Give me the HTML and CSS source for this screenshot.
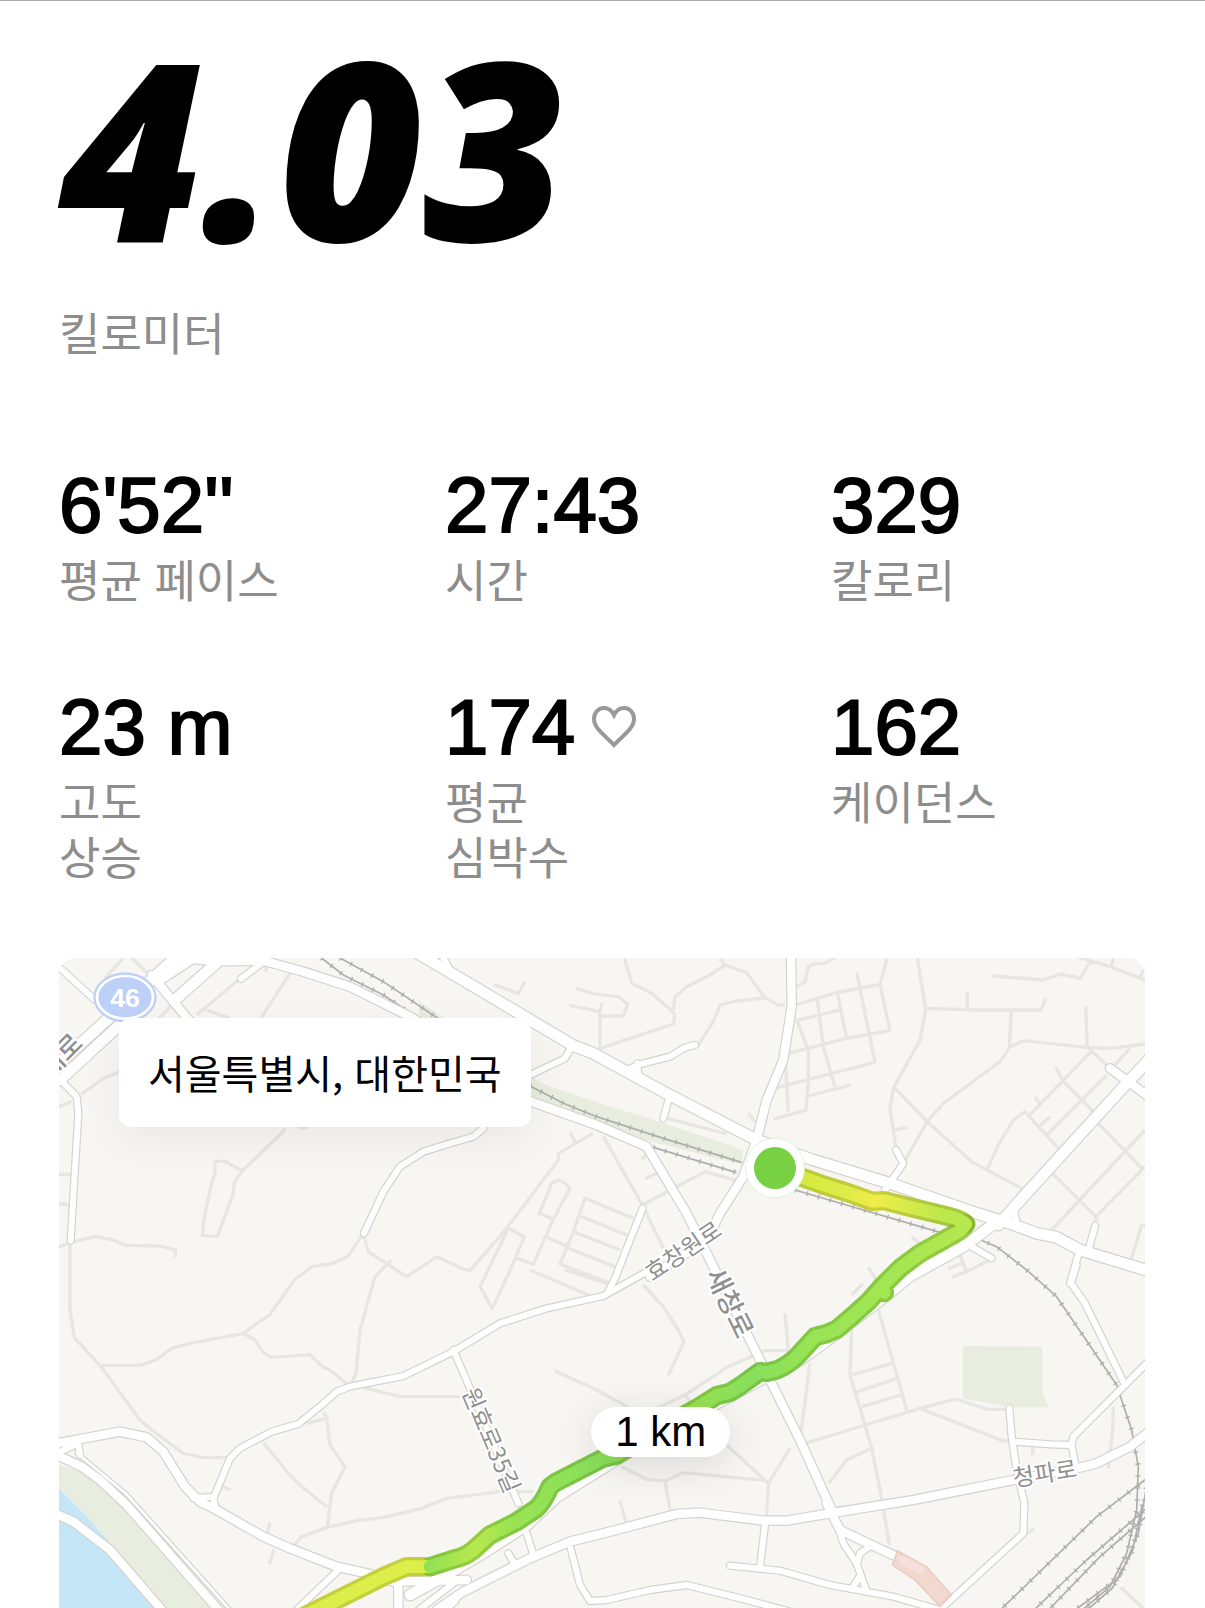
FILE: index.html
```html
<!DOCTYPE html>
<html lang="ko">
  <head>
    <meta charset="UTF-8" />
    <meta name="viewport" content="width=device-width, initial-scale=1.0" />
    <title>러닝 기록</title>
    <link rel="stylesheet" href="styles.css">
  </head>
  <body>
    <main class="run">
      <section class="distance">
        <h1 class="distance-value">4.03</h1>
        <p class="label">킬로미터</p>
      </section>

      <section class="stats">
        <div class="stat">
          <p class="value">6'52''</p>
          <p class="label">평균 페이스</p>
        </div>
        <div class="stat">
          <p class="value">27:43</p>
          <p class="label">시간</p>
        </div>
        <div class="stat">
          <p class="value">329</p>
          <p class="label">칼로리</p>
        </div>
        <div class="stat">
          <p class="value">23 m</p>
          <p class="label">고도<br />상승</p>
        </div>
        <div class="stat">
          <p class="value">
            174
            <svg class="heart" viewBox="0 0 44 42" aria-hidden="true">
              <path d="M22 39 C15 31 2 23 2 13 C2 6 7 2 12 2 C17 2 20 5 22 9 C24 5 27 2 32 2 C37 2 42 6 42 13 C42 23 29 31 22 39 Z" />
            </svg>
          </p>
          <p class="label">평균<br />심박수</p>
        </div>
        <div class="stat">
          <p class="value">162</p>
          <p class="label">케이던스</p>
        </div>
      </section>

      <section class="map">
        <svg class="map-canvas" viewBox="0 0 3258 1950" role="img" aria-label="러닝 경로">
          <defs>
            <linearGradient id="leg-out" gradientUnits="userSpaceOnUse" x1="2150" y1="0" x2="2720" y2="0">
              <stop offset="0" stop-color="#d0e83f" />
              <stop offset="0.4" stop-color="#dfec48" />
              <stop offset="0.52" stop-color="#f1ec49" />
              <stop offset="0.62" stop-color="#e2ec4a" />
              <stop offset="0.85" stop-color="#bfe84c" />
              <stop offset="1" stop-color="#b6e84e" />
            </linearGradient>
            <linearGradient id="leg-back" gradientUnits="userSpaceOnUse" x1="700" y1="0" x2="2720" y2="0">
              <stop offset="0" stop-color="#deee45" />
              <stop offset="0.17" stop-color="#d9ed49" />
              <stop offset="0.19" stop-color="#8edf54" />
              <stop offset="0.23" stop-color="#a0e54f" />
              <stop offset="0.27" stop-color="#b8e84e" />
              <stop offset="0.33" stop-color="#98e353" />
              <stop offset="0.45" stop-color="#8be05a" />
              <stop offset="0.6" stop-color="#98e353" />
              <stop offset="0.68" stop-color="#89df5b" />
              <stop offset="0.78" stop-color="#99e454" />
              <stop offset="0.9" stop-color="#a5e652" />
              <stop offset="1" stop-color="#b6e84e" />
            </linearGradient>

            <g id="roads">
              <!-- north west -->
              <g transform="translate(-27 -24)">
                <path class="w20" d="M20,45 L135,150" />
                <path class="w34" d="M400,0 L320,75 L10,355 M440,15 L325,90" />
                <path class="w26" d="M380,22 L500,34 L640,32 M305,75 L370,155 L425,220" />
                <path class="w34" d="M500,38 L372,152" />
                <path class="w34" d="M230,205 L30,390" />
                <path class="w20" d="M20,378 L80,440 L85,490 L62,872" />
                <path class="w20" d="M645,32 L572,87" />
                <path class="w26" d="M640,32 L760,65 L900,110 L1090,205 L1440,455" />
                <path class="w20" d="M1300,535 L1270,560 L1200,580 L1120,605 L1050,650 L1000,725 L942,850" />
              </g>
              <!-- north -->
              <g transform="translate(1113 -24)">
                <path class="w34" d="M-70,-10 L200,150 L430,287 L490,310 L700,425 L980,570 L1140,627 L1380,700 L1640,790 L1740,820 L1820,850 L1880,862 L1950,900 L2180,970" />
                <path class="w20" d="M35,15 L55,50 M425,290 L405,325 L290,380" />
                <path class="w20" d="M590,360 L640,340 L720,320 L765,293 L795,285 M622,340 L625,375" />
                <path class="w20" d="M715,450 L700,505" />
                <path class="w26" d="M290,450 L500,525 L650,590" />
                <path class="w26" d="M650,590 L770,790 L850,950 L1000,1250 L1110,1470 L1205,1680" />
                <path class="w26" d="M1083,0 L1085,170 L1060,330 L1010,450 L980,570 L940,680 L870,790 L830,870 L660,980" />
                <path class="w20" d="M638,775 L600,870 L555,985 L535,1025" />
              </g>
              <!-- north east -->
              <g transform="translate(2253 -24)">
                <path class="w20" d="M258,600 L280,640 L225,720" />
                <path class="w34" d="M565,825 L640,740 L955,395 L1030,315" />
                <path class="w26" d="M900,355 L955,395 L1030,450" />
                <path class="w20" d="M610,770 L620,820 M545,925 L460,875 M856,827 L835,900 M803,920 L780,1000" />
                <path class="w20" d="M995,955 L1010,970" />
              </g>
              <!-- south west -->
              <g transform="translate(-27 936)">
                <path class="w20" d="M1800,0 L1660,78 L1490,115 L1350,160 L1210,245 L1060,318 L900,350 L860,365 L815,405 L745,462 L665,485 L570,535 L540,565 L490,685 L497,715 M490,680 L430,685" />
                <path class="w26" d="M20,520 L210,485 L290,502 L340,545 L405,650 L450,695 L500,720 L640,800 L720,835 L860,890 L960,912 L1030,935 L1250,930" />
                <path class="w20" d="M865,900 L740,1020 M1210,940 L1100,1025" />
                <path class="w26" d="M1045,935 V1030" />
                <path class="w26" d="M10,550 L95,590 L150,630 L230,705 L510,1025" />
                <path class="w8" d="M80,548 L230,673 L545,1025" />
                <path class="w20" d="M20,550 L85,520 L90,555" />
                <path class="w26" d="M10,728 L70,755 L180,840 L340,1025" />
              </g>
              <!-- south -->
              <g transform="translate(1113 936)">
                <path class="w20" d="M70,240 L120,355 L265,700" />
                <path class="w34" d="M1700,-145 L1600,-70 L1440,18 L1345,95 L1200,205 L1110,270 L1000,325 L860,400 L590,550 L380,680 L290,765 L150,855 L30,925 L-60,975" />
                <path class="w34" d="M20,1030 L70,990" />
                <path class="w26" d="M20,1020 L100,965 L300,865 L420,815 L520,790 L740,732 L810,728 L1000,752 L1070,752 L1200,730 L1450,690 L1740,632 L1940,595 L2000,580 L2100,530 L2170,475" />
                <path class="w20" d="M290,790 L312,860 M235,850 L258,890 M422,835 L450,945 L480,993 L530,990 L660,960 L770,945 L950,990 L1100,1030" />
                <path class="w20" d="M1005,765 L990,890 M900,887 L1050,902 L1200,945 L1390,980 L1530,1020" />
              </g>
              <!-- south east -->
              <g transform="translate(2253 936)">
                <path class="w20" d="M800,-15 L783,40 L825,100 L945,345" />
                <path class="w20" d="M1020,270 L945,345 L790,500 L785,525 L720,523 L610,515 M785,525 L797,590" />
                <path class="w20" d="M598,415 L605,500 L620,600 L643,700 L640,790 L400,1010" />
                <path class="w26" d="M50,700 L90,780 L185,825 L260,860" />
                <path class="w20" d="M85,770 L100,820 L140,880 L170,965 M185,825 L150,850 L140,885 M148,920 L130,950" />
              </g>
            </g>

            <g id="rails">
              <path d="M788,0 L853,51 L973,111 L1100,195 M843,0 L973,71 L1150,190" />
              <path d="M1413,384 L1513,436 L1613,476 L1813,541 L2048,613 M1783,568 L2033,644 M2208,696 L2653,826" />
              <path d="M2753,841 L2813,866 L2903,936 L2993,1016 L3173,1281 L3218,1416 L3238,1526 L3233,1656 L3203,1786 L3153,1886 L3053,1970" />
              <path d="M3268,1558 L3113,1676 L2820,1960 M3268,1646 L3083,1806 L2910,1970 M3268,1670 L3123,1796 L2955,1970" />
              <path d="M3262,1590 L3238,1726 L3183,1856 L3043,1960 M3250,1640 L3220,1780 L3160,1890 L3080,1960" />
            </g>

            <path id="route-out" d="M2148,631 L2238,661 L2293,681 L2373,706 L2440,730 L2475,728 L2563,750 L2663,774 Q2705,784 2720,798" />
            <path id="route-back" d="M2720,798 Q2710,815 2693,824 L2583,886 L2523,931 L2468,986 L2428,1031 L2378,1076 L2333,1114 L2303,1127 L2268,1136 L2213,1196 Q2190,1220 2153,1236 L2123,1243 L2103,1241 L2043,1284 L2013,1303 L1973,1313 L1913,1351 L1813,1406 L1673,1491 L1633,1500 L1553,1541 L1490,1573 L1473,1586 Q1455,1630 1433,1651 L1373,1691 L1293,1731 L1243,1776 Q1220,1795 1193,1801 L1113,1826 M2470,990 L2476,1004" />
            <path id="route-end" d="M1113,1826 L1043,1826 L973,1856 L700,1992" />
          </defs>

          <rect class="land" width="3258" height="1950" />
          <path class="park" d="M0,1521 L73,1541 L133,1586 L203,1646 L500,1960 L300,1960 L150,1760 L0,1585 Z" />
          <path class="park" d="M2712,1164 L2949,1166 L2951,1301 L2968,1348 H2853 L2712,1321 Z" />
          <path class="park" d="M1080,130 L1413,355 L1453,378 L1613,433 L1813,495 L2053,576 L2048,620 L1813,560 L1613,506 L1413,426 L1080,200 Z" />
          <path class="water" d="M0,1590 L73,1666 L163,1766 L310,1960 H0 Z" />

          <g class="lanes">
            <g transform="translate(-27 -24)">
              <path d="M220,24 L165,85 M245,24 L290,68 M648,24 V65 M720,70 L632,205 M565,90 L440,195 M470,180 L540,205 M365,165 L300,235" />
              <path d="M95,432 L160,385 L210,365 M27,470 L65,455 M27,673 H65 M27,760 L60,765" />
              <path d="M27,890 L60,878 L135,860 L185,868 L225,886 L330,888 L376,900 V922 M60,878 V1080 L73,1163" />
              <path d="M705,535 L695,550 L577,662 L553,697 L550,730 L502,860 L457,856 L465,790 L485,700 L495,670 V634 H525 L577,662 M745,530 L762,535 L775,528" />
              <path d="M940,850 L895,918 L850,940 L785,950 L735,988 L660,1093 L580,1150 L420,1180 L365,1195 L320,1228 L272,1246 H155" />
              <path d="M940,850 L955,905 L1070,980 L1160,920 L1235,955 L1260,962 L1370,835 L1525,630 V610 L1630,550 M1025,930 L975,980 L930,1140 L918,1270 L905,1300" />
            </g>
            <g transform="translate(-27 936)">
              <path d="M73,203 L150,286 L270,450 L325,495 L400,550 L460,563 H530" />
              <path d="M580,190 L615,210 L640,248 L665,262 L780,254 L820,292 L840,300 L890,340 M940,352 L1050,380 H1240" />
              <path d="M820,425 L830,445 L840,525 L885,590 L845,670 L832,772 M830,445 L770,460 M640,518 L720,615 L750,645 L832,712" />
              <path d="M730,830 L755,800 L832,772 L920,752 L1000,742 L1115,715 L1190,685 L1350,665 L1450,665" />
              <path d="M515,650 L543,660 M660,757 L652,795 M672,838 L658,883" />
            </g>
            <g transform="translate(1113 936)">
              <path d="M640,45 L700,110 L745,180 L762,215 L715,315 M375,303 L490,355 L600,415 M300,0 L475,75 M405,0 L535,42" />
              <path d="M680,415 L765,375 L890,292 L960,262 L1005,242 H1075 L1065,130 M765,375 L785,400 M1140,280 L1110,510" />
              <path d="M890,525 L1015,640 L1080,535 M1015,640 L1010,740 M575,590 L650,628 L705,633 L760,608 L1010,632 M705,633 L720,720 M570,692 L588,757" />
            </g>
            <g transform="translate(1113 -24)">
              <path d="M583,24 L605,100 L665,130 L722,180 L735,195 L730,222 L510,295 M730,180 L735,140 L770,110 L840,75 L885,45 L870,24 M885,45 L950,68 L1005,143 L1045,165 H1065" />
              <path d="M1005,143 L920,153 L870,165 L850,215 L805,285 M190,103 L265,130 L285,95 M437,115 L485,130 L565,140 L593,162 L580,198 H512 M418,166 L510,185 M516,157 L510,185 V300" />
              <path d="M1100,110 L1125,95 L1135,50 L1150,42 L1185,40 L1215,24 M955,490 L975,515 M710,505 L890,552 M420,548 L438,580" />
              <path d="M520,560 L637,765 L700,895 M637,765 L825,665 L920,692 M635,628 L655,610 M645,687 L680,670" />
              <path d="M235,835 L150,1010 L187,1075 L245,950 L283,860 Z M260,925 L310,942 L370,808 M370,808 L420,715 L405,700 L385,690 L365,700 L328,790 Z M350,862 L415,890" />
              <path d="M610,805 L465,745 L430,845 L390,942 L540,1000 M450,798 L590,855 M430,845 L570,900 M410,893 L555,950" />
            </g>
            <g transform="translate(2253 -24)">
              <path d="M-45,165 L80,128 L210,103 L232,24 M-45,212 L90,180 M-65,310 L110,265 L240,242 L210,103 M-100,413 L195,337 L140,68 M22,150 L40,290 L75,412 M82,128 L110,265" />
              <path d="M-40,210 L-5,300 V395 L-12,480 L-110,508 M-75,310 L-65,485 M-5,438 L122,405" />
              <path d="M322,24 L347,180 L330,270 L250,415 L240,475 L257,590 M347,175 L500,180 H693 L707,145 M472,125 V178 M604,180 L598,290 M255,415 L352,515 L485,635 L635,715" />
              <path d="M280,640 L352,515 L400,460 L570,335 L600,290 L640,272 L830,292 L900,295 L1005,282 M250,540 L292,532" />
              <path d="M547,78 L700,90 L752,72 L812,85 L835,42 L850,38 M800,20 L900,50 L1005,90 M910,24 L903,50 M1000,60 L990,80" />
              <path d="M827,170 L832,292 L890,345 M960,295 L915,345 M843,305 L655,500 M890,375 L710,555 M737,352 L757,390 L850,485 M675,442 L692,465 M720,500 L690,528 M745,595 L645,485 L610,510 L565,585 L533,655" />
              <path d="M865,520 L1000,660 M1005,540 L725,840 M725,668 L858,800 L1005,650 M858,800 V830 M845,905 L960,940 L995,825 H1010" />
              <path d="M305,860 L340,890 M445,905 L470,965 L540,930 M470,965 L425,982 M415,957 L455,940 M175,952 L205,1000" />
            </g>
            <g transform="translate(2253 936)">
              <path d="M205,120 L245,260 L265,330 L290,420 M125,180 L120,315 L165,465 L185,535 L215,685 L238,825 M125,315 L248,280 M135,368 L262,325 M155,410 L275,375 M185,535 L110,570 L57,640" />
              <path d="M-30,525 L165,465 L330,415 L435,387 L535,418 H590 M330,415 L580,513 H610 M125,75 L160,40" />
              <path d="M668,525 V555 M910,410 L908,480 L895,595 M650,790 L672,777 M932,952 L1005,1020" />
            </g>
          </g>

          <use href="#rails" class="rail-line" />
          <use href="#rails" class="rail-ties" />
          <use href="#roads" class="road-edge" />
          <use href="#roads" class="road-fill" />
          <path class="station" d="M2515,1778 L2603,1826 L2678,1911 L2643,1946 L2568,1866 L2500,1821 Z" />
          <path class="platform" d="M2530,1806 L2585,1836" />

          <g class="road-names">
            <text transform="translate(-28 365) rotate(-45)" class="name-lg">대로</text>
            <text transform="translate(1780 972) rotate(-34)">효창원로</text>
            <text transform="translate(1938 948) rotate(64)" class="name-lg">새창로</text>
            <text transform="translate(1208 1302) rotate(67)">원효로35길</text>
            <text transform="translate(2866 1586) rotate(-9)">청파로</text>
          </g>

          <g class="shield">
            <ellipse class="shield-body" cx="198" cy="118" rx="95" ry="75" />
            <ellipse class="shield-ring" cx="198" cy="118" rx="84" ry="64" />
            <text x="198" y="146">46</text>
          </g>

          <g class="route">
            <g class="route-edge">
              <use href="#route-end" stroke="#c4cf3b" />
              <use href="#route-back" stroke="url(#leg-back)" />
              <use href="#route-out" stroke="url(#leg-out)" />
              <use href="#route-back" stroke="#50881e" stroke-opacity="0.3" />
              <use href="#route-out" stroke="#7a801e" stroke-opacity="0.3" />
            </g>
            <g class="route-core">
              <use href="#route-end" stroke="#dcee49" />
              <use href="#route-back" stroke="url(#leg-back)" />
              <use href="#route-out" stroke="url(#leg-out)" />
            </g>
          </g>

          <circle class="start-halo" cx="2148" cy="630" r="89" />
          <circle class="start-dot" cx="2148" cy="630" r="63" />
        </svg>
        <div class="place">서울특별시, 대한민국</div>
        <div class="marker">1 km</div>
      </section>
    </main>
  </body>
</html>
```

FILE: styles.css
```css
* {
  box-sizing: border-box;
}
body {
  margin: 0;
  background-color: #fff;
  color: #000;
  font-family: "Liberation Sans", "Noto Sans CJK KR", sans-serif;
}
h1,
p {
  margin: 0;
}
.run {
  border-top: 1px solid #aaa;
  padding: 25px 60px 0 59px;
}
.distance-value {
  font-family: "Open Sans", sans-serif;
  font-size: 248px;
  font-weight: 800;
  font-style: italic;
  line-height: 240px;
}
.distance .label {
  margin-top: 38px;
}
.label {
  color: #8d8d8d;
  font-family: "Noto Sans CJK KR", sans-serif;
  font-size: 45px;
  line-height: 55px;
}
.stats {
  display: grid;
  grid-template-columns: repeat(3, 1fr);
  column-gap: 72px;
  row-gap: 81px;
  margin-top: 106px;
}
.value {
  display: flex;
  align-items: center;
  gap: 17px;
  margin-bottom: 6px;
  font-size: 78px;
  line-height: 80px;
  -webkit-text-stroke: 2px #000;
}
.heart {
  width: 44px;
  height: 42px;
  fill: none;
  stroke: #999;
  stroke-width: 4;
}
.map {
  position: relative;
  margin-top: 75px;
  border-radius: 16px 16px 0 0;
  overflow: hidden;
}
.map-canvas {
  display: block;
  width: 100%;
}
.land {
  fill: #f7f6f2;
}
.park {
  fill: #e7eedf;
}
.water {
  fill: #c5e6f7;
}
.station {
  fill: #f0cfc4;
  fill-opacity: 0.75;
  stroke: #ecc8bd;
  stroke-width: 4;
}
.platform {
  fill: none;
  stroke: #f6e0dc;
  stroke-width: 24;
  stroke-linecap: round;
}
.lanes {
  fill: none;
  stroke: #e7e6e1;
  stroke-width: 10;
  stroke-linejoin: round;
}
.rail-line,
.rail-ties,
.road-edge,
.road-fill {
  fill: none;
  stroke-linejoin: round;
}
.rail-line {
  stroke: #aeaeac;
  stroke-width: 5;
}
.rail-ties {
  stroke: #aeaeac;
  stroke-width: 15;
  stroke-dasharray: 4 32;
}
.road-edge {
  --edge: 7px;
  stroke: #d5d2cd;
  stroke-linecap: round;
}
.road-fill {
  --edge: 0px;
  stroke: #fff;
  stroke-linecap: round;
}
.w8 {
  stroke-width: calc(8px + var(--edge));
}
.w20 {
  stroke-width: calc(18px + var(--edge));
}
.w26 {
  stroke-width: calc(25px + var(--edge));
}
.w34 {
  stroke-width: calc(32px + var(--edge));
}
.road-names {
  fill: #8f8f8f;
  stroke: #fff;
  stroke-width: 12;
  stroke-linejoin: round;
  paint-order: stroke;
  font-family: "Noto Sans CJK KR", sans-serif;
  font-size: 70px;
}
.name-lg {
  font-size: 80px;
  font-weight: 500;
}
.shield-body {
  fill: #bdd1f8;
}
.shield-ring {
  fill: none;
  stroke: #fff;
  stroke-width: 8;
}
.shield text {
  fill: #fff;
  font-size: 80px;
  font-weight: 700;
  text-anchor: middle;
}
.route {
  fill: none;
  stroke-linejoin: round;
  stroke-linecap: round;
}
.route-edge {
  stroke-width: 58;
}
.route-core {
  stroke-width: 38;
}
.start-halo {
  fill: #fff;
  stroke: #d5ecc6;
  stroke-width: 2;
}
.start-dot {
  fill: #78d143;
}
.place {
  position: absolute;
  top: 60px;
  left: 60px;
  padding: 26px 29px;
  border-radius: 12px;
  background-color: #fff;
  box-shadow: 0 12px 40px rgba(0, 0, 0, 0.06);
  font-family: "Noto Sans CJK KR", sans-serif;
  font-size: 40px;
  line-height: 57px;
}
.marker {
  position: absolute;
  top: 69%;
  left: 49%;
  padding: 0 24px;
  border-radius: 25px;
  background-color: #fff;
  box-shadow: 0 8px 40px rgba(0, 0, 0, 0.12);
  font-size: 42px;
  line-height: 50px;
}
```
